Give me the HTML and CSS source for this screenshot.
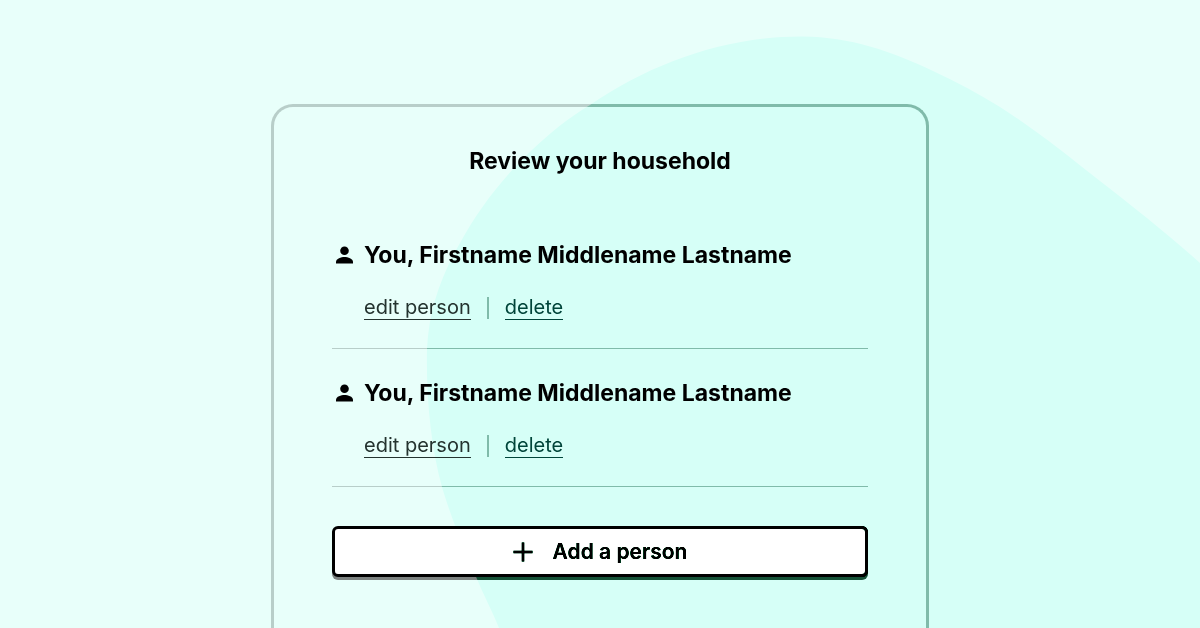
FILE: index.html
```html
<!DOCTYPE html>
<html lang="en">
<head>
<meta charset="utf-8">
<meta name="viewport" content="width=device-width, initial-scale=1">
<title>Review your household</title>
<link rel="stylesheet" href="styles.css">
</head>
<body class="page">
<main class="card">
  <h1 class="title">Review your household</h1>
  <ul class="people">
    <li class="person">
      <h2 class="name">
        <svg class="avatar" viewBox="0 0 24 24" aria-hidden="true"><circle cx="12.500" cy="7.800" r="4.300"/><path d="M4 20.500v-1.700c0-3.200 5.100-4.800 8.500-4.800s8.500 1.600 8.500 4.800v1.700z"/></svg>
        You, Firstname Middlename Lastname
      </h2>
      <div class="actions">
        <a class="link" href="#edit-1">edit person</a>
        <span class="divider"></span>
        <a class="link link-soft" href="#delete-1">delete</a>
      </div>
    </li>
    <li class="person">
      <h2 class="name">
        <svg class="avatar" viewBox="0 0 24 24" aria-hidden="true"><circle cx="12.500" cy="7.800" r="4.300"/><path d="M4 20.500v-1.700c0-3.200 5.100-4.800 8.500-4.800s8.500 1.600 8.500 4.800v1.700z"/></svg>
        You, Firstname Middlename Lastname
      </h2>
      <div class="actions">
        <a class="link" href="#edit-2">edit person</a>
        <span class="divider"></span>
        <a class="link link-soft" href="#delete-2">delete</a>
      </div>
    </li>
  </ul>
  <button class="add" type="button">
    <svg class="plus" viewBox="0 0 20 20" aria-hidden="true"><path d="M10 .5v19M.5 10h19"/></svg>
    Add a person
  </button>
</main>
<svg class="blob" viewBox="0 0 1200 628" preserveAspectRatio="xMidYMid slice" aria-hidden="true"><path d="M499 628C491 608 483 594 477 579C463 548 450 514 442 487C431 447 426 399 427 349C429 310 440 278 460 243C478 210 502 178 532 150C550 133 568 118 590 105C653 62 728 36 803 36.500C850 37 891 51 933 71C957 82 979 94 1000 107C1036 130 1068 156 1100 181C1136 209 1170 236 1200 263V628z"/></svg>
</body>
</html>
```
FILE: styles.css
```css
* {
  box-sizing: border-box;
}

.page {
  position: relative;
  display: flex;
  flex-direction: column;
  align-items: center;
  height: 100vh;
  margin: 0;
  padding: 104px 24px 0;
  overflow: hidden;
  background: #e8fffa;
  color: #000;
  font-family: Inter, "Liberation Sans", sans-serif;
}

.blob {
  position: absolute;
  inset: 0;
  width: 100%;
  height: 100%;
  fill: #8fb8a2;
  mix-blend-mode: color-burn;
  pointer-events: none;
}

.card {
  flex: 1 0 auto;
  width: 100%;
  max-width: 658px;
  padding: 38px 58px 48px;
  border: 3px solid #b8cec9;
  border-bottom: 0;
  border-radius: 22px 22px 0 0;
}

.title,
.name {
  position: relative;
  z-index: 1;
  margin: 0;
  font-size: 23px;
  font-weight: 700;
  line-height: 32px;
}

.title {
  text-align: center;
}

.people {
  margin: 0;
  padding: 34px 0 0;
  list-style: none;
}

.person {
  padding: 28px 0;
  border-bottom: 1px solid #b8cec9;
}

.name {
  display: flex;
  align-items: center;
  gap: 8px;
}

.avatar {
  width: 24px;
  height: 24px;
}

.actions {
  display: flex;
  align-items: center;
  gap: 16px;
  padding: 25px 0 0 32px;
}

.link {
  position: relative;
  z-index: 1;
  border-bottom: 1px solid currentColor;
  color: #24332f;
  font-size: 20px;
  line-height: 23px;
  text-decoration: none;
}

.link-soft {
  color: #00453a;
}

.divider {
  width: 2px;
  height: 22px;
  background: #b8cec9;
}

.add {
  display: flex;
  align-items: center;
  justify-content: center;
  gap: 20px;
  width: 100%;
  height: 51px;
  margin-top: 39px;
  border: 3px solid #000;
  border-radius: 6px;
  background: #fff;
  box-shadow: 0 3px 0 #7c8280;
  color: #000;
  font: inherit;
  font-size: 21px;
  font-weight: 600;
}

.plus {
  width: 20px;
  height: 20px;
  fill: none;
  stroke: #000;
  stroke-width: 2.5;
}
```
